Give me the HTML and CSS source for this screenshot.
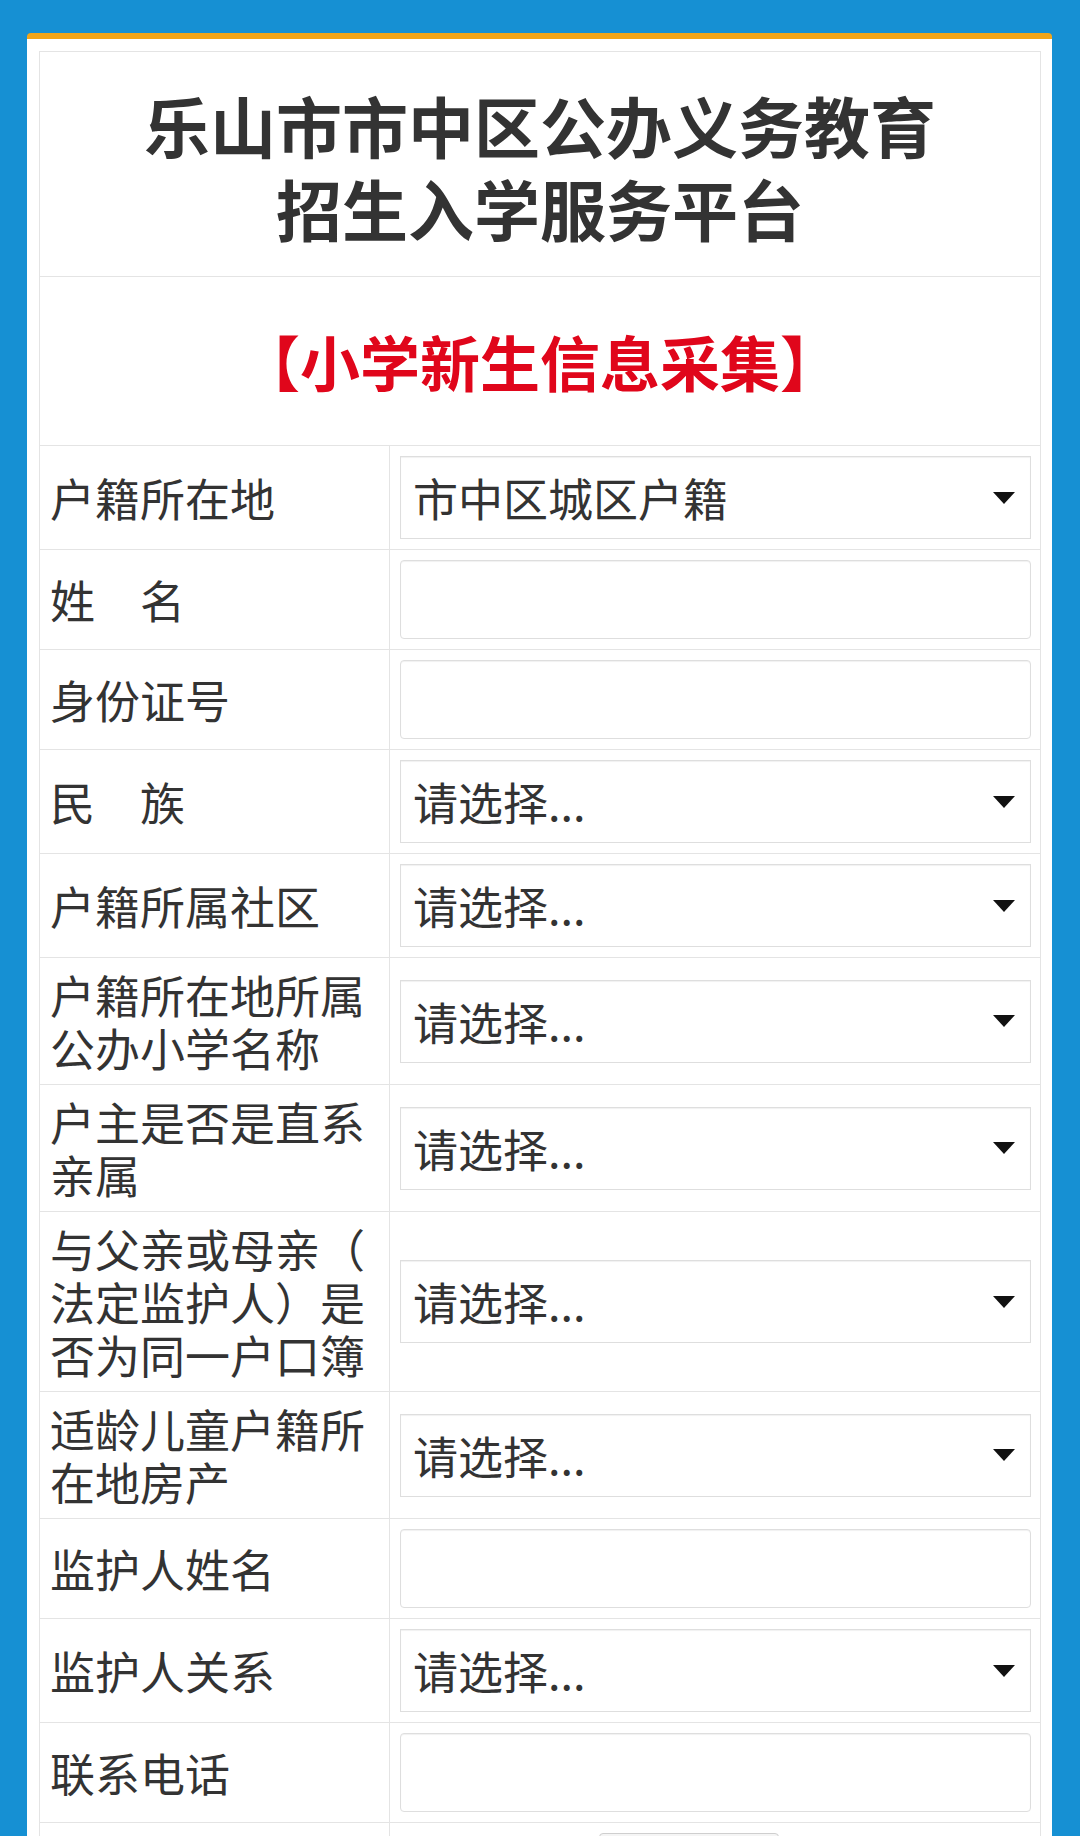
FILE: index.html
```html
<!DOCTYPE html>
<html lang="zh-CN">
<head>
    <meta charset="UTF-8">
    <meta name="viewport" content="width=device-width, initial-scale=1.0">
    <title>乐山市市中区公办义务教育招生入学服务平台</title>
    <link rel="stylesheet" href="styles.css">
</head>
<body>
    <div class="card">
        <div class="panel">
            <div class="site-title">乐山市市中区公办义务教育<br>招生入学服务平台</div>
            <div class="form-title">【小学新生信息采集】</div>

            <div class="row">
                <div class="label">户籍所在地</div>
                <div class="field">
                    <div class="select-wrap">
                        <select class="form-control">
                            <option>市中区城区户籍</option>
                        </select>
                    </div>
                </div>
            </div>

            <div class="row">
                <div class="label">姓　名</div>
                <div class="field"><input class="form-control" type="text"></div>
            </div>

            <div class="row">
                <div class="label">身份证号</div>
                <div class="field"><input class="form-control" type="text"></div>
            </div>

            <div class="row">
                <div class="label">民　族</div>
                <div class="field">
                    <div class="select-wrap">
                        <select class="form-control"><option>请选择...</option></select>
                    </div>
                </div>
            </div>

            <div class="row">
                <div class="label">户籍所属社区</div>
                <div class="field">
                    <div class="select-wrap">
                        <select class="form-control"><option>请选择...</option></select>
                    </div>
                </div>
            </div>

            <div class="row">
                <div class="label">户籍所在地所属公办小学名称</div>
                <div class="field">
                    <div class="select-wrap">
                        <select class="form-control"><option>请选择...</option></select>
                    </div>
                </div>
            </div>

            <div class="row">
                <div class="label">户主是否是直系亲属</div>
                <div class="field">
                    <div class="select-wrap">
                        <select class="form-control"><option>请选择...</option></select>
                    </div>
                </div>
            </div>

            <div class="row">
                <div class="label">与父亲或母亲（法定监护人）是否为同一户口簿</div>
                <div class="field">
                    <div class="select-wrap">
                        <select class="form-control"><option>请选择...</option></select>
                    </div>
                </div>
            </div>

            <div class="row">
                <div class="label">适龄儿童户籍所在地房产</div>
                <div class="field">
                    <div class="select-wrap">
                        <select class="form-control"><option>请选择...</option></select>
                    </div>
                </div>
            </div>

            <div class="row">
                <div class="label">监护人姓名</div>
                <div class="field"><input class="form-control" type="text"></div>
            </div>

            <div class="row">
                <div class="label">监护人关系</div>
                <div class="field">
                    <div class="select-wrap">
                        <select class="form-control"><option>请选择...</option></select>
                    </div>
                </div>
            </div>

            <div class="row">
                <div class="label">联系电话</div>
                <div class="field"><input class="form-control" type="text"></div>
            </div>

            <div class="row">
                <div class="label"></div>
                <div class="field">
                    <div class="code-box"></div>
                </div>
            </div>
        </div>
    </div>
</body>
</html>
```

FILE: styles.css
```css
* {
    margin: 0;
    padding: 0;
    box-sizing: border-box;
}

body {
    font-family: "Noto Sans CJK SC", "Noto Sans", sans-serif;
    background: #1690d3;
    padding: 33px 28px 0 27px;
    color: #333;
}

.card {
    background: #fff;
    border-top: 6px solid #f2a519;
    border-radius: 4px 4px 0 0;
    padding: 12px 11px 11px 12px;
}

.panel {
    border: 1px solid #e4e4e4;
}

.site-title {
    font-size: 66px;
    font-weight: bold;
    line-height: 83px;
    text-align: center;
    color: #333;
    padding: 31px 0 27px;
    border-bottom: 1px solid #e4e4e4;
}

.form-title {
    font-size: 60px;
    font-weight: bold;
    color: #e0061b;
    text-align: center;
    height: 169px;
    line-height: 168px;
    border-bottom: 1px solid #e4e4e4;
}

.row {
    display: grid;
    grid-template-columns: 350px 1fr;
    border-bottom: 1px solid #e4e4e4;
}

.label {
    font-size: 45px;
    line-height: 53px;
    padding: 10px 8px 10px 10px;
    border-right: 1px solid #e4e4e4;
    display: flex;
    align-items: center;
    color: #333;
    line-break: anywhere;
}

.field {
    padding: 10px 9px 10px 10px;
    display: flex;
    align-items: center;
}

.form-control {
    width: 100%;
    height: 79px;
    border: 1px solid #dedede;
    border-radius: 4px;
    background: #fff;
    box-shadow: inset 0 1px 1px rgba(0, 0, 0, 0.06);
    font-family: inherit;
    font-size: 45px;
    color: #333;
    padding: 0 50px 0 12px;
    outline: none;
}

.select-wrap {
    position: relative;
    width: 100%;
}

.select-wrap select {
    appearance: none;
    -webkit-appearance: none;
    height: 83px;
    border-radius: 0;
}

.select-wrap::after {
    content: "";
    position: absolute;
    right: 16px;
    top: 50%;
    margin-top: -6px;
    border-left: 11px solid transparent;
    border-right: 11px solid transparent;
    border-top: 12px solid #111;
    pointer-events: none;
}

.code-box {
    margin-left: 199px;
    width: 180px;
    height: 79px;
    border: 1px solid #cfcfcf;
    border-radius: 4px;
    background: #f5f5f5;
}
```
